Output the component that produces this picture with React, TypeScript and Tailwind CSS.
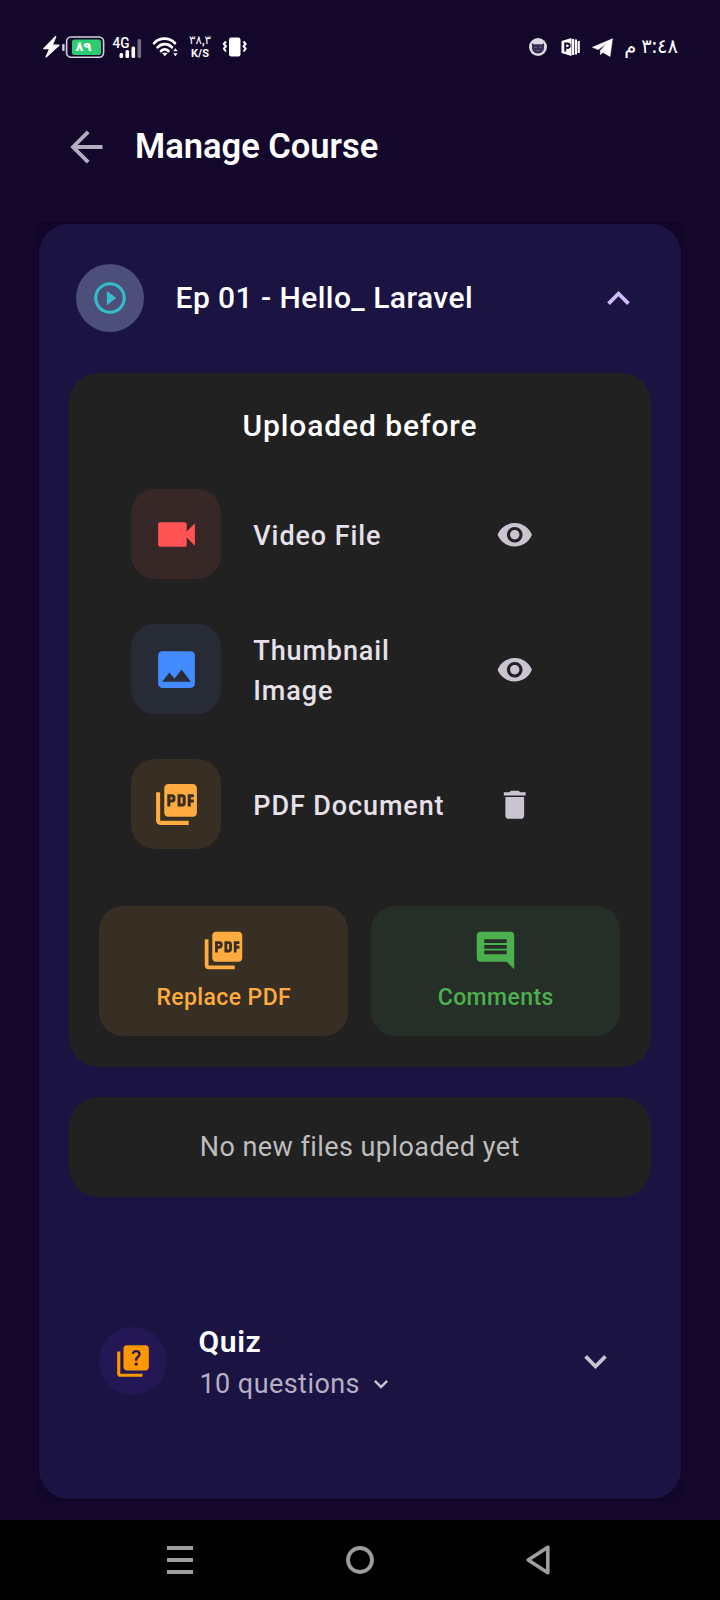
import type { ReactNode } from "react";
import {
  MdComment,
  MdDelete,
  MdExpandLess,
  MdExpandMore,
  MdImage,
  MdPictureAsPdf,
  MdPlayCircleOutline,
  MdQuiz,
  MdVideocam,
  MdVisibility,
} from "react-icons/md";

function StatusBar() {
  return (
    <div className="flex h-[94px] items-center justify-between pr-[42px] pl-[43px] text-white">
      <div className="flex items-center">
        <svg width="62" height="24" viewBox="0 0 62 24" className="shrink-0">
          <path d="M12.8 1.500 .8 13.600h6L3 22 16 10.200H9.200Z" fill="#fff" stroke="#fff" strokeWidth="1.200" strokeLinejoin="round" />
          <rect x="19.200" y="9" width="2.400" height="7" rx="1" fill="#d5d2dc" />
          <rect x="23.600" y="2" width="37" height="20.200" rx="4.500" fill="none" stroke="#d5d2dc" strokeWidth="1.600" />
          <rect x="29" y="4.400" width="29" height="15.600" rx="2.500" fill="#2ecc71" />
          <text x="40.500" y="16" textAnchor="middle" fontSize="13" fontWeight="600" fontFamily="Noto Sans, DejaVu Sans, sans-serif" fill="#fff">
            ٨٩
          </text>
        </svg>
        <svg width="30" height="26" viewBox="0 0 30 26" className="ml-[7px] shrink-0">
          <text x="0.500" y="13.500" fontSize="15.500" fontWeight="500" fontFamily="Roboto, sans-serif" textLength="17" lengthAdjust="spacingAndGlyphs" fill="#fff">
            4G
          </text>
          <g fill="#fff">
            <rect x="7.500" y="19" width="3.600" height="5" rx="1.500" />
            <rect x="13.500" y="16" width="3.600" height="8" rx="1.500" />
            <rect x="19.500" y="12.500" width="3.600" height="11.500" rx="1.500" />
            <rect x="25.500" y="5" width="3.600" height="19" rx="1.500" opacity="0.4" />
          </g>
        </svg>
        <svg width="26" height="22" viewBox="0 0 26 22" className="ml-[10px] shrink-0">
          <g fill="none" stroke="#fff" strokeWidth="2.700" strokeLinecap="round">
            <path d="M2 7.200c5.800-6 15.200-6 21 0" />
            <path d="M5.600 11.200c4-4.100 10.400-4.100 14.300 0" />
            <path d="M9 15c2.200-2.200 5.400-2.200 7.500 0" />
          </g>
          <path d="M9.800 16.800h6L12.800 20.200Z" fill="#fff" />
          <path d="M21.200 15.200 23.400 12.200l2.200 3ZM21.200 17.200h4.400l-2.200 3Z" fill="#fff" />
        </svg>
        <div className="ml-[8px] flex w-[28px] flex-col items-center font-[Roboto,'DejaVu_Sans',sans-serif] text-[11px] leading-[12px] font-bold text-white">
          <span className="text-[12px] font-medium whitespace-nowrap" dir="rtl">
            ٣٨,٣
          </span>
          <span className="mt-[2px]">K/S</span>
        </div>
        <svg width="26" height="22" viewBox="0 0 26 22" className="ml-[8px] shrink-0">
          <rect x="7" y="1.500" width="11.500" height="19" rx="2.200" fill="#fff" />
          <path
            d="M4 5.500 1.800 8l2.200 2.200-2.200 2.400L4 15.500M21.500 5.500 23.700 8l-2.200 2.200 2.200 2.400-2.200 2.900"
            fill="none"
            stroke="#fff"
            strokeWidth="2"
            strokeLinejoin="round"
          />
        </svg>
      </div>
      <div className="flex items-center">
        <svg width="18" height="18" viewBox="0 0 18 18" className="shrink-0">
          <circle cx="9" cy="9" r="9" fill="#dcd9e3" />
          <path d="M3 5.200 5.600 6.600c2-.5 4.800-.5 6.800 0L15 5.200v4.600c0 3.400-2.400 5.600-6 5.600s-6-2.200-6-5.600Z" fill="#372f50" />
          <path d="M5.500 9.500h2M10.500 9.500h2M7.500 12.500h3" stroke="#6d6682" strokeWidth="1" />
        </svg>
        <svg width="19" height="20" viewBox="0 0 19 20" className="ml-[14px] shrink-0">
          <path d="M.5 4 10.500 1v18L.5 16Z" fill="#fff" />
          <path d="M4.200 14.500V6.500h2.300a2.200 2.200 0 0 1 0 4.400H4.200" fill="none" stroke="#13072c" strokeWidth="1.900" />
          <path d="M12 2v16M14.900 2.600v14.800M17.700 4v12" stroke="#fff" strokeWidth="2.200" />
        </svg>
        <svg width="21" height="19" viewBox="0 0 21 19" className="ml-[12px] shrink-0">
          <path d="M20.500 .8 .4 9.300l5.800 2.300L14.500 5.500 8.400 12.400l0 4.200 2.600-2.200 7 4Z" fill="#fff" stroke="#fff" strokeWidth="0.600" strokeLinejoin="round" />
        </svg>
        <span className="-mt-[2px] ml-[11px] font-['Noto_Sans','DejaVu_Sans',sans-serif] text-[19.500px] leading-6 whitespace-nowrap" dir="rtl">
          ٣:٤٨ م
        </span>
      </div>
    </div>
  );
}

function TopBar() {
  return (
    <div className="flex h-[105px] items-center pl-[69px]">
      <svg width="36" height="36" viewBox="0 0 36 36" fill="none" stroke="#b5aec0" strokeWidth="3.800" className="shrink-0">
        <path d="M33.500 18H4M19.200 2.800 4 18l15.200 15.200" />
      </svg>
      <h1 className="-mt-[2px] ml-[30px] text-[34.500px] leading-[40px] font-semibold text-white">Manage Course</h1>
    </div>
  );
}

function FileRow({ tile, icon, label, action }: { tile: string; icon: ReactNode; label: string; action: ReactNode }) {
  return (
    <div className="flex h-[90px] items-center">
      <div className={`flex size-[90px] shrink-0 items-center justify-center rounded-[24px] ${tile}`}>{icon}</div>
      <div className="mt-[2.500px] ml-[32px] w-[210px] text-[27px] leading-[40px] font-medium tracking-[0.890px] text-[#e6e0e9]">
        {label}
      </div>
      <div className="mt-[1px] ml-[33px] text-[#cac4d0]">{action}</div>
    </div>
  );
}

function ActionButton({ className, icon, label }: { className: string; icon: ReactNode; label: string }) {
  return (
    <button className={`flex h-[129.700px] flex-1 flex-col items-center rounded-[24px] pt-[22px] ${className}`}>
      {icon}
      <span className="mt-[11px] text-[23px] leading-[27px] font-medium tracking-[0.400px]">{label}</span>
    </button>
  );
}

function NavBar() {
  return (
    <div className="grid h-[80px] grid-cols-3 items-center justify-items-center bg-black px-[90px]">
      <svg width="26" height="28" viewBox="0 0 26 28" fill="#9e9e9e">
        <path d="M0 0h26v4H0zM0 12h26v4H0zM0 24h26v4H0z" />
      </svg>
      <svg width="28" height="28" viewBox="0 0 28 28" fill="none" stroke="#9e9e9e" strokeWidth="3.800">
        <circle cx="14" cy="14" r="12" />
      </svg>
      <svg width="24" height="30" viewBox="0 0 24 30" fill="none" stroke="#9e9e9e" strokeWidth="3.600" strokeLinejoin="round" className="-ml-[4px]">
        <path d="M21.800 2.200v25.600L2.200 15Z" />
      </svg>
    </div>
  );
}

export default function App() {
  return (
    <div className="flex h-[1600px] w-[720px] flex-col overflow-hidden bg-[#13072c] font-[Roboto,sans-serif]">
      <StatusBar />
      <TopBar />
      <div className="mr-[38.500px] ml-[38px] mt-[24px] h-[1277px] border border-[#0e0422] bg-[#12072a]">
        <section className="flex h-[1275px] flex-col rounded-[30px] bg-[#1b1342] pt-[40px]">
          <div className="flex h-[68px] items-center pr-[39.500px] pl-[37px]">
            <div className="flex size-[68px] items-center justify-center rounded-full bg-[#4b4f7a]">
              <MdPlayCircleOutline className="size-[38px] text-[#34bccb]" />
            </div>
            <h2 className="ml-[31.500px] flex-1 text-[30px] leading-[40px] font-[550] tracking-[0.440px] text-white">Ep 01 - Hello_ Laravel</h2>
            <MdExpandLess className="size-[45px] text-[#d0bcff]" />
          </div>

          <div className="mx-[30px] mt-[41px] h-[694px] rounded-[30px] bg-[#212121]">
            <h3 className="pt-[32.500px] pl-[0.500px] text-center text-[30px] leading-[40px] font-medium tracking-[0.890px] text-white">
              Uploaded before
            </h3>
            <div className="mt-[43.900px] flex flex-col gap-[45px] pl-[62.300px]">
              <FileRow
                tile="bg-[#382727]"
                icon={<MdVideocam className="size-[49px] text-[#ff5252]" />}
                label="Video File"
                action={<MdVisibility className="size-[37.500px]" />}
              />
              <FileRow
                tile="bg-[#262b36]"
                icon={<MdImage className="size-[49px] text-[#448aff]" />}
                label="Thumbnail Image"
                action={<MdVisibility className="size-[37.500px]" />}
              />
              <FileRow
                tile="bg-[#372e24]"
                icon={<MdPictureAsPdf className="size-[49px] text-[#ffab40]" />}
                label="PDF Document"
                action={<MdDelete className="size-[37.500px]" />}
              />
            </div>
            <div className="mt-[56.600px] flex gap-[23px] px-[30.300px]">
              <ActionButton
                className="bg-[#372e24] text-[#ffab40]"
                icon={<MdPictureAsPdf className="size-[45px]" />}
                label="Replace PDF"
              />
              <ActionButton
                className="bg-[#262f27] text-[#4caf50]"
                icon={<MdComment className="size-[45px]" />}
                label="Comments"
              />
            </div>
          </div>

          <div className="mx-[30px] mt-[30px] flex h-[99.500px] items-center justify-center rounded-[30px] bg-[#212121] pt-[1px] text-[27px] tracking-[0.440px] text-[#bdbdbd]">
            No new files uploaded yet
          </div>

          <div className="mx-[30px] mt-[100.500px] flex h-[156px] items-start rounded-b-[30px] pt-[30px] pl-[30px] shadow-[0_3px_6px_-1px_rgba(20,10,50,0.030)]">
            <div className="flex size-[68px] shrink-0 items-center justify-center rounded-full bg-[#241755]">
              <MdQuiz className="size-[38px] text-[#ff9800]" />
            </div>
            <div className="-mt-[5px] ml-[31.500px] flex-1">
              <div className="text-[30px] leading-[40px] font-semibold tracking-[0.600px] text-white">Quiz</div>
              <div className="mt-[1px] ml-[1px] flex items-center text-[27px] leading-[42px] tracking-[0.440px] text-[#b5aec4]">
                10 questions
                <MdExpandMore className="ml-[7px] size-[28px] text-[#cac4d0]" />
              </div>
            </div>
            <MdExpandMore className="mt-[11.500px] mr-[32.500px] size-[45px] text-[#cac4d0]" />
          </div>
        </section>
      </div>
      <div className="h-[20px] flex-1" />
      <NavBar />
    </div>
  );
}
